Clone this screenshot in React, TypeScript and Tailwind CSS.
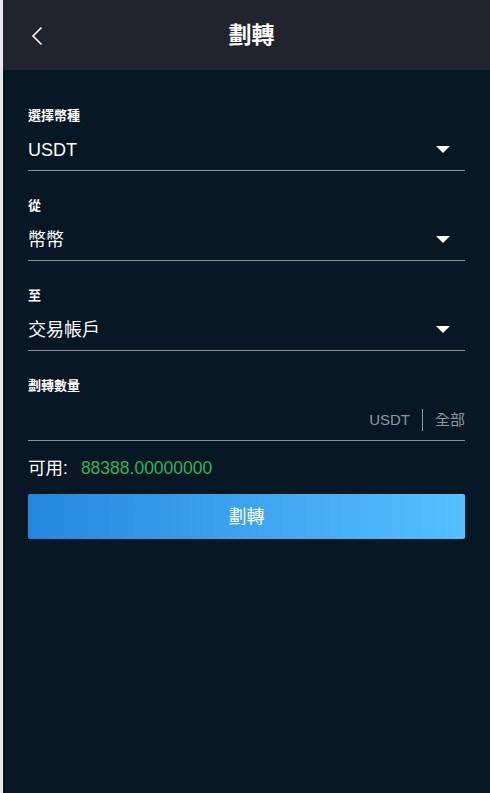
import React from "react";

const font = { fontFamily: '"Liberation Sans", "Noto Sans CJK TC", sans-serif' };

function Caret() {
  return (
    <svg width="14" height="8" viewBox="0 0 14 8" className="shrink-0">
      <path d="M0 0 L14 0 L7 7 Z" fill="#ffffff" />
    </svg>
  );
}

function FieldLabel({ children }: { children: React.ReactNode }) {
  return <div className="h-[17px] text-[13px] font-bold leading-[17px] text-white">{children}</div>;
}

function SelectField({ label, value }: { label: string; value: string }) {
  return (
    <div className="pt-[26px]">
      <FieldLabel>{label}</FieldLabel>
      <div className="mt-[14px] flex h-[24px] items-center justify-between border-b border-[#8b9099] pb-[8px] pr-[15px] box-content">
        <span className="text-[18px] leading-[24px] text-white">{value}</span>
        <Caret />
      </div>
    </div>
  );
}

export default function App() {
  return (
    <div className="flex min-h-[793px] w-full bg-[#e8e9ec]" style={font}>
      <div className="ml-[3px] flex flex-1 flex-col bg-[#081724]">
        <header className="relative flex h-[70px] items-center justify-center bg-[#22242d] pl-[10px]">
          <button className="absolute left-[26px] top-[24px] p-[2px]">
            <svg width="12" height="20" viewBox="0 0 12 20" fill="none">
              <path d="M10.5 1.5 L2 10 L10.5 18.5" stroke="#ffffff" strokeWidth="1.6" />
            </svg>
          </button>
          <h1 className="text-[23px] font-bold leading-[30px] text-white">劃轉</h1>
        </header>

        <main className="px-[25px]">
          <div className="mt-[11px]">
            <SelectField label="選擇幣種" value="USDT" />
          </div>
          <SelectField label="從" value="幣幣" />
          <SelectField label="至" value="交易帳戶" />

          <div className="pt-[26px]">
            <FieldLabel>劃轉數量</FieldLabel>
            <div className="mt-[14px] flex h-[24px] items-center justify-end border-b border-[#8b9099] pb-[8px] box-content">
              <span className="text-[15px] leading-[24px] text-[#8f96a0]">USDT</span>
              <span className="mx-[12px] h-[22px] w-px bg-[#8f96a0]" />
              <span className="text-[15px] leading-[24px] text-[#8f96a0]">全部</span>
            </div>
          </div>

          <div className="mt-[15px] flex h-[24px] items-center text-[17.5px] leading-[24px]">
            <span className="text-white">可用:</span>
            <span className="ml-[13px] text-[#2fb455]">88388.00000000</span>
          </div>

          <button className="mt-[14px] flex h-[45px] w-full items-center justify-center rounded-[2px] bg-gradient-to-r from-[#2388dd] to-[#54c0ff] text-[18px] leading-[24px] text-white">
            劃轉
          </button>
        </main>
      </div>
    </div>
  );
}
